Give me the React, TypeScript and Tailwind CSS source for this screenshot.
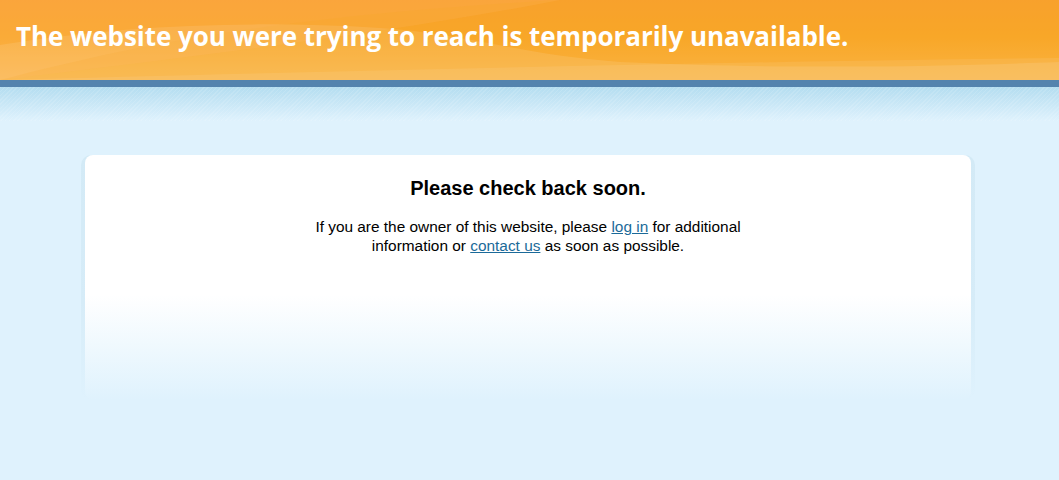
import React from "react";

export default function App() {
  return (
    <div className="min-h-[480px] w-full bg-[#dff2fd] font-['Liberation_Sans',Arial,sans-serif]">
      <header className="relative h-[80px] overflow-hidden bg-[linear-gradient(to_bottom,#f9a035_0%,#f9a92e_45%,#fbbb55_100%)]">
        <svg className="absolute inset-0 h-full w-full" viewBox="0 0 1059 80" preserveAspectRatio="none">
          <path d="M0 80 C 150 40, 300 15, 560 0 L 1059 0 L 1059 80 Z" fill="#f7a21c" opacity="0.35" />
          <path d="M0 80 C 200 55, 380 35, 560 0 L 0 0 Z" fill="#fbb04a" opacity="0.35" />
          <path d="M0 45 C 120 25, 250 20, 380 28 C 470 34, 520 55, 620 62 C 800 70, 950 66, 1059 62 L 1059 80 L 0 80 Z" fill="#ffffff" opacity="0.1" />
          <path d="M0 80 C 300 72, 700 62, 1059 58 L 1059 80 Z" fill="#ffffff" opacity="0.08" />
        </svg>
        <h1 className="relative pl-[16px] pt-[18px] font-['Open_Sans',sans-serif] text-[26px] font-bold leading-[36px] tracking-[-0.05px] text-white">
          The website you were trying to reach is temporarily unavailable.
        </h1>
      </header>
      <div className="h-[7px] bg-[#5483ae]" />
      <div className="h-[34px] bg-[repeating-linear-gradient(135deg,rgba(255,255,255,0.12)_0px,rgba(255,255,255,0.12)_1px,transparent_1px,transparent_3px),linear-gradient(to_bottom,#b4ddf0,#dff2fd)]" />
      <main className="pt-[34px]">
        <div className="ml-[81px] w-[894px] rounded-[10px] bg-[linear-gradient(to_bottom,#d3eaf6_0%,#d6ecf8_60%,#dff2fd_100%)] px-[4px]">
          <div className="h-[245px] rounded-[8px] bg-[linear-gradient(to_bottom,#ffffff_57%,#dff2fd_100%)] pt-[22px] text-center text-black">
            <h2 className="text-[20px] font-bold leading-[23px]">Please check back soon.</h2>
            <p className="mx-auto mt-[17px] w-[460px] text-[15.4px] leading-[19px]">
              If you are the owner of this website, please{" "}
              <a href="#" className="text-[#1b6a99] underline">log in</a> for additional information or{" "}
              <a href="#" className="text-[#1b6a99] underline">contact us</a> as soon as possible.
            </p>
          </div>
        </div>
      </main>
    </div>
  );
}
